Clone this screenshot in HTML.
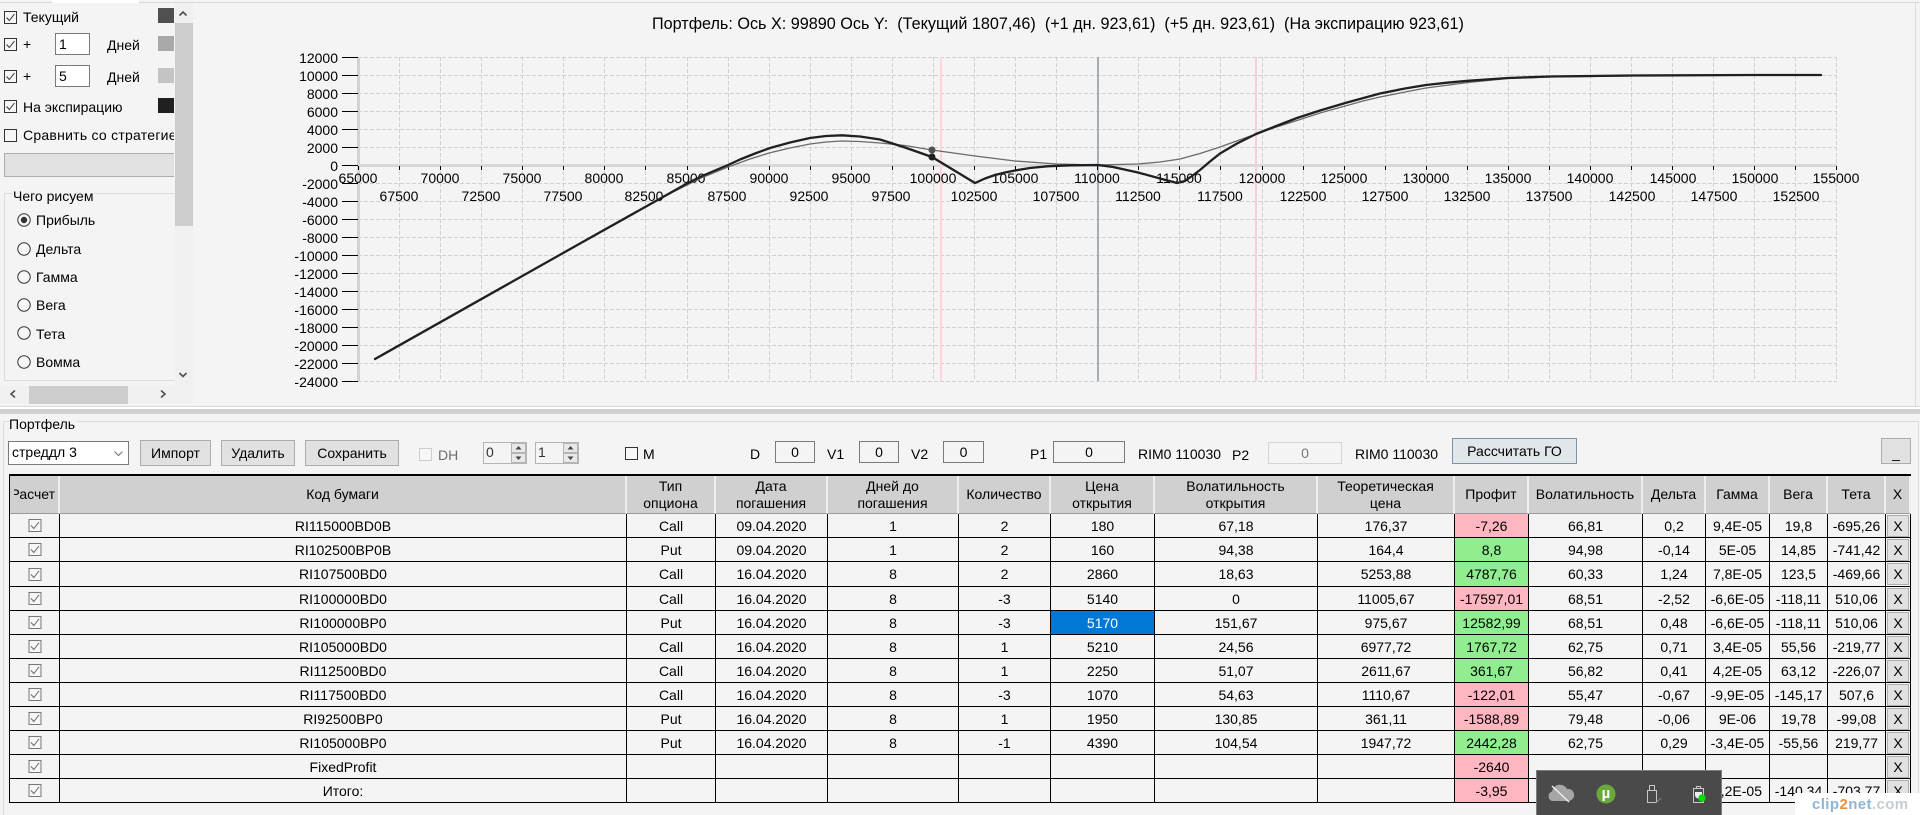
<!DOCTYPE html>
<html lang="ru"><head><meta charset="utf-8"><title>Портфель</title>
<style>
html,body{margin:0;padding:0;width:1920px;height:815px;overflow:hidden;background:#f4f4f4}
body{position:relative;font:14px/16px "Liberation Sans",Arial,sans-serif;color:#000}
.a{position:absolute;white-space:nowrap;box-sizing:border-box}
.box{border:1px solid #7a7a7a;text-align:center;background:#f4f4f4}
.btn{background:#e1e1e1;border:1px solid #adadad;text-align:center}
.sw{width:16px;height:15px;left:158px}
.cb{width:13px;height:13px;left:4px}
svg{display:block}
table{position:absolute;left:9px;top:474px;width:1902px;table-layout:fixed;border-collapse:separate;border-spacing:0;border-left:1px solid #000;border-top:2px solid #000;background:#f4f4f4}
td,th{box-sizing:border-box;padding:0;text-align:center;white-space:nowrap;overflow:hidden;font-weight:normal;border-right:1px solid #000;border-bottom:1px solid #000;height:24px;line-height:16px}
th{height:38px;background:#d0d0d0;border-right:2px solid #eee;border-bottom:1px solid #9a9a9a;line-height:17px}
tr.t td{height:25px}
.p{background:#ffb6c1}.g{background:#90ee90}
.s{background:#0078d7;color:#fff}
.x{display:block;box-sizing:border-box;width:22px;height:22px;margin-left:1px;line-height:20px;background:#e1e1e1;border:1px solid #adadad}
.tc{margin:0 auto;display:block;transform:translateX(.5px)}
</style></head><body>
<svg width="0" height="0" style="position:absolute"><defs>
<symbol id="c" viewBox="0 0 13 13"><rect x=".5" y=".5" width="12" height="12" fill="#f6f6f6" stroke="#333"/><path d="M2.5 6.5l2.8 3 5.2-6.5" fill="none" stroke="#333" stroke-width="1"/></symbol>
<symbol id="e" viewBox="0 0 13 13"><rect x=".5" y=".5" width="12" height="12" fill="#f6f6f6" stroke="#333"/></symbol>
<symbol id="d" viewBox="0 0 13 13"><rect x=".5" y=".5" width="12" height="12" fill="#f6f6f6" stroke="#777"/><path d="M2.5 6.5l2.8 3 5.2-6.5" fill="none" stroke="#666" stroke-width="1"/></symbol>
<symbol id="r" viewBox="0 0 14 14"><circle cx="7" cy="7" r="6.2" fill="#f6f6f6" stroke="#333"/></symbol>
</defs></svg>

<!-- top strip -->
<div class="a" style="left:0;top:2px;width:1920px;height:1px;background:#d8d8d8"></div>
<div class="a" style="left:52px;top:0;width:87px;height:3px;background:#fff"></div>

<!-- left panel -->
<svg class="a cb" style="top:11px"><use href="#c"/></svg><div class="a" style="left:23px;top:9px">Текущий</div>
<svg class="a cb" style="top:38px"><use href="#c"/></svg><div class="a" style="left:23px;top:36px">+</div>
<svg class="a cb" style="top:70px"><use href="#c"/></svg><div class="a" style="left:23px;top:68px">+</div>
<div class="a box" style="left:55px;top:33px;width:35px;height:22px;text-align:left;padding:2px 0 0 3px;background:#fff">1</div>
<div class="a box" style="left:55px;top:65px;width:35px;height:22px;text-align:left;padding:2px 0 0 3px;background:#fff">5</div>
<div class="a" style="left:107px;top:37px">Дней</div>
<div class="a" style="left:107px;top:69px">Дней</div>
<div class="a sw" style="top:8px;background:#505050"></div>
<div class="a sw" style="top:36px;background:#a9a9a9"></div>
<div class="a sw" style="top:68px;background:#c4c4c4"></div>
<div class="a sw" style="top:98px;background:#202020"></div>
<svg class="a cb" style="top:100px"><use href="#c"/></svg><div class="a" style="left:23px;top:99px">На экспирацию</div>
<svg class="a cb" style="top:129px"><use href="#e"/></svg><div class="a" style="left:23px;top:127px;width:151px;overflow:hidden;letter-spacing:.25px">Сравнить со стратегией</div>
<div class="a" style="left:4px;top:153px;width:170px;height:24px;background:#e1e1e1;border:1px solid #adadad;border-right:0"></div>
<div class="a" style="left:4px;top:193px;width:170px;height:188px;border:1px solid #dcdcdc;border-right:0"></div>
<div class="a" style="left:12px;top:188px;background:#f4f4f4;padding:0 1px">Чего рисуем</div>
<svg class="a" style="left:17px;top:213px" width="14" height="14"><use href="#r"/><circle cx="7" cy="7" r="3.2" fill="#333"/></svg><div class="a" style="left:36px;top:212px">Прибыль</div>
<svg class="a" style="left:17px;top:242px" width="14" height="14"><use href="#r"/></svg><div class="a" style="left:36px;top:241px">Дельта</div>
<svg class="a" style="left:17px;top:270px" width="14" height="14"><use href="#r"/></svg><div class="a" style="left:36px;top:269px">Гамма</div>
<svg class="a" style="left:17px;top:298px" width="14" height="14"><use href="#r"/></svg><div class="a" style="left:36px;top:297px">Вега</div>
<svg class="a" style="left:17px;top:326px" width="14" height="14"><use href="#r"/></svg><div class="a" style="left:36px;top:326px">Тета</div>
<svg class="a" style="left:17px;top:355px" width="14" height="14"><use href="#r"/></svg><div class="a" style="left:36px;top:354px">Вомма</div>

<!-- scrollbars -->
<div class="a" style="left:175px;top:3px;width:18px;height:401px;background:#f0f0f0"></div>
<div class="a" style="left:175px;top:23px;width:18px;height:203px;background:#cdcdcd"></div>
<div class="a" style="left:0;top:386px;width:175px;height:18px;background:#f0f0f0"></div>
<div class="a" style="left:29px;top:386px;width:99px;height:18px;background:#cdcdcd"></div>
<svg class="a" style="left:0;top:0" width="193" height="404" fill="none" stroke="#505050" stroke-width="1.6"><path d="M179.5 15.5l3.5-3.5 3.5 3.5M179.5 373l3.5 3.5 3.5-3.5M15 390.5l-4 3.500 4 3.500M161 390.5l4 3.500-4 3.500"/></svg>

<!-- chart -->
<div class="a" style="left:652px;top:16px;white-space:pre;font-size:16.2px">Портфель: Ось X: 99890 Ось Y:  (Текущий 1807,46)  (+1 дн. 923,61)  (+5 дн. 923,61)  (На экспирацию 923,61)</div>
<svg class="a" style="left:0;top:0" width="1920" height="405" font-family="Liberation Sans,Arial,sans-serif" font-size="14" fill="#000">
<path d="M358 57.500H1837M358 75.500H1837M358 93.500H1837M358 111.500H1837M358 129.500H1837M358 147.500H1837M358 183.500H1837M358 201.500H1837M358 219.500H1837M358 237.500H1837M358 255.500H1837M358 273.500H1837M358 291.500H1837M358 309.500H1837M358 327.500H1837M358 345.500H1837M358 363.500H1837M358 381.500H1837" stroke="#d0d0d0" stroke-dasharray="4 2" fill="none"/>
<path d="M399.500 57V381M440.500 57V381M481.500 57V381M522.500 57V381M563.500 57V381M604.500 57V381M645.500 57V381M687.500 57V381M728.500 57V381M769.500 57V381M810.500 57V381M851.500 57V381M892.500 57V381M933.500 57V381M974.500 57V381M1015.500 57V381M1056.500 57V381M1097.500 57V381M1138.500 57V381M1179.500 57V381M1220.500 57V381M1262.500 57V381M1303.500 57V381M1344.500 57V381M1385.500 57V381M1426.500 57V381M1467.500 57V381M1508.500 57V381M1549.500 57V381M1590.500 57V381M1631.500 57V381M1672.500 57V381M1713.500 57V381M1754.500 57V381M1795.500 57V381M1836.500 57V381" stroke="#d0d0d0" stroke-dasharray="4 2" fill="none"/>
<rect x="357" y="57" width="3" height="324" fill="#d2d2d2"/>
<rect x="358" y="164" width="1479" height="3" fill="#d8d8d8"/>
<rect x="940" y="57" width="2" height="324" fill="#ffd4da"/>
<rect x="1255" y="57" width="2" height="324" fill="#f2d0d6"/>
<rect x="1097" y="57" width="2" height="324" fill="#a4adba"/>
<path d="M342 57.500H358M342 75.500H358M342 93.500H358M342 111.500H358M342 129.500H358M342 147.500H358M342 165.500H358M342 183.500H358M342 201.500H358M342 219.500H358M342 237.500H358M342 255.500H358M342 273.500H358M342 291.500H358M342 309.500H358M342 327.500H358M342 345.500H358M342 363.500H358M342 381.500H358" stroke="#000" fill="none"/>
<path d="M358.500 166V170M399.500 166V170M440.500 166V170M481.500 166V170M522.500 166V170M563.500 166V170M604.500 166V170M645.500 166V170M687.500 166V170M728.500 166V170M769.500 166V170M810.500 166V170M851.500 166V170M892.500 166V170M933.500 166V170M974.500 166V170M1015.500 166V170M1056.500 166V170M1097.500 166V170M1138.500 166V170M1179.500 166V170M1220.500 166V170M1262.500 166V170M1303.500 166V170M1344.500 166V170M1385.500 166V170M1426.500 166V170M1467.500 166V170M1508.500 166V170M1549.500 166V170M1590.500 166V170M1631.500 166V170M1672.500 166V170M1713.500 166V170M1754.500 166V170M1795.500 166V170M1836.500 166V170" stroke="#000" fill="none"/>
<g text-anchor="end">
<text x="338" y="63">12000</text><text x="338" y="81">10000</text><text x="338" y="99">8000</text><text x="338" y="117">6000</text><text x="338" y="135">4000</text><text x="338" y="153">2000</text><text x="338" y="171">0</text><text x="338" y="189">-2000</text><text x="338" y="207">-4000</text><text x="338" y="225">-6000</text><text x="338" y="243">-8000</text><text x="338" y="261">-10000</text><text x="338" y="279">-12000</text><text x="338" y="297">-14000</text><text x="338" y="315">-16000</text><text x="338" y="333">-18000</text><text x="338" y="351">-20000</text><text x="338" y="369">-22000</text><text x="338" y="387">-24000</text>
</g>
<g text-anchor="middle">
<text x="358" y="183">65000</text><text x="440" y="183">70000</text><text x="522" y="183">75000</text><text x="604" y="183">80000</text><text x="686" y="183">85000</text><text x="769" y="183">90000</text><text x="851" y="183">95000</text><text x="933" y="183">100000</text><text x="1015" y="183">105000</text><text x="1097" y="183">110000</text><text x="1179" y="183">115000</text><text x="1262" y="183">120000</text><text x="1344" y="183">125000</text><text x="1426" y="183">130000</text><text x="1508" y="183">135000</text><text x="1590" y="183">140000</text><text x="1673" y="183">145000</text><text x="1755" y="183">150000</text><text x="1836" y="183">155000</text>
<text x="399" y="201">67500</text><text x="481" y="201">72500</text><text x="563" y="201">77500</text><text x="644" y="201">82500</text><text x="727" y="201">87500</text><text x="809" y="201">92500</text><text x="891" y="201">97500</text><text x="974" y="201">102500</text><text x="1056" y="201">107500</text><text x="1138" y="201">112500</text><text x="1220" y="201">117500</text><text x="1303" y="201">122500</text><text x="1385" y="201">127500</text><text x="1467" y="201">132500</text><text x="1549" y="201">137500</text><text x="1632" y="201">142500</text><text x="1714" y="201">147500</text><text x="1796" y="201">152500</text>
</g>
<polyline fill="none" stroke="#6a6a6a" stroke-width="1.300" stroke-linejoin="round" points="375,359 588,239 663,197 701,178 728,167 750,159 770,152.700 790,148 810,144 826,142 842,141 860,141.500 880,143 905,145.500 932,150 975,156 1015,161 1057,164 1097,165 1138,164 1160,162 1180,159 1200,153.500 1220,147 1238,140.500 1256,134 1275,127.500 1297,120.500 1320,113 1347,105.500 1363,101 1380,97 1405,92 1426,88 1468,82.500 1508,78.500 1549,77 1631,76"/>
<polyline fill="none" stroke="#202020" stroke-width="2.300" stroke-linejoin="round" stroke-linecap="round" points="375,359 588,239 663,197 686,184 701,176.500 715,170.500 728,165 740,159.500 755,153.500 770,148 790,142.500 810,138 826,136 842,135.300 860,136.500 880,139.500 905,147.500 932,157 975,183 985,178.500 995,175 1005,172.500 1015,170.500 1030,168 1047,166.300 1070,165.300 1098,165 1113,167 1138,172.500 1160,178.500 1177,183 1185,181 1192,176 1200,170 1210,161.500 1220,153.500 1237,143.500 1256,134 1275,126.500 1297,118 1320,110.500 1347,102.500 1380,93.500 1405,88.500 1426,85 1447,82.700 1468,80.800 1508,78 1549,76.500 1590,76 1631,75.500 1755,75 1821,75"/>
<circle cx="932" cy="150" r="3.500" fill="#505050"/><circle cx="932" cy="157" r="3.500" fill="#202020"/>
</svg>

<!-- panel dividers -->
<div class="a" style="left:0;top:406px;width:1920px;height:1px;background:#d8d8d8"></div>
<div class="a" style="left:0;top:407px;width:1920px;height:2px;background:#fff"></div>
<div class="a" style="left:1915px;top:3px;width:1px;height:403px;background:#dcdcdc"></div>
<div class="a" style="left:0;top:409px;width:1920px;height:5px;background:#d0d0d0"></div>

<!-- portfolio group -->
<div class="a" style="left:3px;top:421px;width:1916px;height:400px;border:1px solid #dcdcdc"></div>
<div class="a" style="left:9px;top:416px;background:#f4f4f4;padding-right:2px">Портфель</div>
<div class="a" style="left:8px;top:441px;width:121px;height:24px;background:#fff;border:1px solid #7a7a7a;padding:2px 0 0 3px">стреддл 3</div>
<svg class="a" style="left:114px;top:451px" width="9" height="6" fill="none" stroke="#707070"><path d="M.5 .5l4 4 4-4"/></svg>
<div class="a btn" style="left:140px;top:440px;width:71px;height:26px;line-height:24px">Импорт</div>
<div class="a btn" style="left:221px;top:440px;width:74px;height:26px;line-height:24px">Удалить</div>
<div class="a btn" style="left:305px;top:440px;width:94px;height:26px;line-height:24px">Сохранить</div>
<div class="a" style="left:419px;top:448px;width:13px;height:13px;border:1px solid #ccc;background:#f6f6f6"></div>
<div class="a" style="left:438px;top:447px;color:#6d6d6d">DH</div>
<div class="a" style="left:483px;top:442px;width:44px;height:22px;border:1px solid #b4b4b4;padding:1px 0 0 2px;background:#f4f4f4;color:#333">0</div>
<div class="a" style="left:535px;top:442px;width:44px;height:22px;border:1px solid #b4b4b4;padding:1px 0 0 2px;background:#f4f4f4;color:#333">1</div>
<svg class="a" style="left:511px;top:443px" width="15" height="20"><rect x=".5" y=".5" width="14" height="9" fill="#e8e8e8" stroke="#b4b4b4"/><rect x=".5" y="10.500" width="14" height="9" fill="#e8e8e8" stroke="#b4b4b4"/><path d="M7.500 3l3 3.500h-6zM7.500 17l3-3.500h-6z" fill="#444"/></svg>
<svg class="a" style="left:563px;top:443px" width="15" height="20"><rect x=".5" y=".5" width="14" height="9" fill="#e8e8e8" stroke="#b4b4b4"/><rect x=".5" y="10.500" width="14" height="9" fill="#e8e8e8" stroke="#b4b4b4"/><path d="M7.500 3l3 3.500h-6zM7.500 17l3-3.500h-6z" fill="#444"/></svg>
<div class="a" style="left:625px;top:447px;width:13px;height:13px;border:1px solid #333;background:#f6f6f6"></div>
<div class="a" style="left:643px;top:446px">M</div>
<div class="a" style="left:750px;top:446px">D</div>
<div class="a box" style="left:775px;top:441px;width:40px;height:22px;line-height:20px">0</div>
<div class="a" style="left:827px;top:446px">V1</div>
<div class="a box" style="left:859px;top:441px;width:40px;height:22px;line-height:20px">0</div>
<div class="a" style="left:911px;top:446px">V2</div>
<div class="a box" style="left:943px;top:441px;width:41px;height:22px;line-height:20px">0</div>
<div class="a" style="left:1030px;top:446px">P1</div>
<div class="a box" style="left:1053px;top:441px;width:72px;height:22px;line-height:20px">0</div>
<div class="a" style="left:1138px;top:446px">RIM0 110030</div>
<div class="a" style="left:1232px;top:447px">P2</div>
<div class="a" style="left:1268px;top:442px;width:74px;height:22px;border:1px solid #d4d4d4;text-align:center;line-height:20px;color:#777">0</div>
<div class="a" style="left:1355px;top:446px">RIM0 110030</div>
<div class="a" style="left:1452px;top:438px;width:125px;height:26px;background:#e1e6ea;border:1px solid #7a93ab;text-align:center;line-height:24px">Рассчитать ГО</div>
<div class="a btn" style="left:1881px;top:438px;width:30px;height:26px;line-height:28px">_</div>

<table>
<colgroup><col style="width:50px"><col style="width:567px"><col style="width:89px"><col style="width:112px"><col style="width:131px"><col style="width:92px"><col style="width:104px"><col style="width:163px"><col style="width:137px"><col style="width:74px"><col style="width:114px"><col style="width:63px"><col style="width:64px"><col style="width:58px"><col style="width:58px"><col style="width:25px"></colgroup>
<tr><th><div style="margin-left:4px;width:41px;overflow:hidden;direction:rtl;white-space:nowrap">Расчет</div></th><th>Код бумаги</th><th>Тип<br>опциона</th><th>Дата<br>погашения</th><th>Дней до<br>погашения</th><th>Количество</th><th>Цена<br>открытия</th><th>Волатильность<br>открытия</th><th>Теоретическая<br>цена</th><th>Профит</th><th>Волатильность</th><th>Дельта</th><th>Гамма</th><th>Вега</th><th>Тета</th><th>X</th></tr>
<tr><td><svg class="tc" width="13" height="13"><use href="#d"/></svg></td><td>RI115000BD0B</td><td>Call</td><td>09.04.2020</td><td>1</td><td>2</td><td>180</td><td>67,18</td><td>176,37</td><td class="p">-7,26</td><td>66,81</td><td>0,2</td><td>9,4E-05</td><td>19,8</td><td>-695,26</td><td><span class="x">X</span></td></tr>
<tr><td><svg class="tc" width="13" height="13"><use href="#d"/></svg></td><td>RI102500BP0B</td><td>Put</td><td>09.04.2020</td><td>1</td><td>2</td><td>160</td><td>94,38</td><td>164,4</td><td class="g">8,8</td><td>94,98</td><td>-0,14</td><td>5E-05</td><td>14,85</td><td>-741,42</td><td><span class="x">X</span></td></tr>
<tr class="t"><td><svg class="tc" width="13" height="13"><use href="#d"/></svg></td><td>RI107500BD0</td><td>Call</td><td>16.04.2020</td><td>8</td><td>2</td><td>2860</td><td>18,63</td><td>5253,88</td><td class="g">4787,76</td><td>60,33</td><td>1,24</td><td>7,8E-05</td><td>123,5</td><td>-469,66</td><td><span class="x">X</span></td></tr>
<tr><td><svg class="tc" width="13" height="13"><use href="#d"/></svg></td><td>RI100000BD0</td><td>Call</td><td>16.04.2020</td><td>8</td><td>-3</td><td>5140</td><td>0</td><td>11005,67</td><td class="p">-17597,01</td><td>68,51</td><td>-2,52</td><td>-6,6E-05</td><td>-118,11</td><td>510,06</td><td><span class="x">X</span></td></tr>
<tr><td><svg class="tc" width="13" height="13"><use href="#d"/></svg></td><td>RI100000BP0</td><td>Put</td><td>16.04.2020</td><td>8</td><td>-3</td><td class="s">5170</td><td>151,67</td><td>975,67</td><td class="g">12582,99</td><td>68,51</td><td>0,48</td><td>-6,6E-05</td><td>-118,11</td><td>510,06</td><td><span class="x">X</span></td></tr>
<tr><td><svg class="tc" width="13" height="13"><use href="#d"/></svg></td><td>RI105000BD0</td><td>Call</td><td>16.04.2020</td><td>8</td><td>1</td><td>5210</td><td>24,56</td><td>6977,72</td><td class="g">1767,72</td><td>62,75</td><td>0,71</td><td>3,4E-05</td><td>55,56</td><td>-219,77</td><td><span class="x">X</span></td></tr>
<tr><td><svg class="tc" width="13" height="13"><use href="#d"/></svg></td><td>RI112500BD0</td><td>Call</td><td>16.04.2020</td><td>8</td><td>1</td><td>2250</td><td>51,07</td><td>2611,67</td><td class="g">361,67</td><td>56,82</td><td>0,41</td><td>4,2E-05</td><td>63,12</td><td>-226,07</td><td><span class="x">X</span></td></tr>
<tr><td><svg class="tc" width="13" height="13"><use href="#d"/></svg></td><td>RI117500BD0</td><td>Call</td><td>16.04.2020</td><td>8</td><td>-3</td><td>1070</td><td>54,63</td><td>1110,67</td><td class="p">-122,01</td><td>55,47</td><td>-0,67</td><td>-9,9E-05</td><td>-145,17</td><td>507,6</td><td><span class="x">X</span></td></tr>
<tr><td><svg class="tc" width="13" height="13"><use href="#d"/></svg></td><td>RI92500BP0</td><td>Put</td><td>16.04.2020</td><td>8</td><td>1</td><td>1950</td><td>130,85</td><td>361,11</td><td class="p">-1588,89</td><td>79,48</td><td>-0,06</td><td>9E-06</td><td>19,78</td><td>-99,08</td><td><span class="x">X</span></td></tr>
<tr><td><svg class="tc" width="13" height="13"><use href="#d"/></svg></td><td>RI105000BP0</td><td>Put</td><td>16.04.2020</td><td>8</td><td>-1</td><td>4390</td><td>104,54</td><td>1947,72</td><td class="g">2442,28</td><td>62,75</td><td>0,29</td><td>-3,4E-05</td><td>-55,56</td><td>219,77</td><td><span class="x">X</span></td></tr>
<tr><td><svg class="tc" width="13" height="13"><use href="#d"/></svg></td><td>FixedProfit</td><td></td><td></td><td></td><td></td><td></td><td></td><td></td><td class="p">-2640</td><td></td><td></td><td></td><td></td><td></td><td><span class="x">X</span></td></tr>
<tr><td><svg class="tc" width="13" height="13"><use href="#d"/></svg></td><td>Итого:</td><td></td><td></td><td></td><td></td><td></td><td></td><td></td><td class="p">-3,95</td><td></td><td></td><td>1,2E-05</td><td>-140,34</td><td>-703,77</td><td><span class="x">X</span></td></tr>
</table>

<!-- tray popup -->
<div class="a" style="left:1536px;top:770px;width:186px;height:45px;background:#4a4a4a;border:1px solid #7c7c7c;border-bottom:0"></div>
<svg class="a" style="left:1536px;top:770px" width="186" height="45">
<path d="M16 31a5 5 0 0 1 0-9.500a8 8 0 0 1 15-2.500a6 6 0 0 1 2 12z" fill="#a6a6a6"/>
<path d="M16 16L33 32" stroke="#eee" stroke-width="1.500"/>
<circle cx="70" cy="24" r="9.500" fill="#6aa83c"/>
<text x="70" y="28" text-anchor="middle" font-family="Liberation Sans,Arial,sans-serif" font-size="15" font-weight="bold" fill="#fff">µ</text>
<path d="M111.500 20.500h9v12h-9zM113.500 20.500v-5h5v5" fill="none" stroke="#c8c8c8"/>
<path d="M120 33l5-5" stroke="#888" fill="none"/>
<path d="M157.500 18.500h10v14h-10zM160.500 18.500v-2h4v2" fill="none" stroke="#c8c8c8"/>
<path d="M159 22h7v3a3.500 3.500 0 0 1-7 0z" fill="#eee"/>
<circle cx="166" cy="28" r="3.700" fill="#00e000"/>
</svg>

<!-- watermark -->
<div class="a" style="left:1795px;top:793px;width:125px;height:22px;background:#fff"></div>
<div class="a" style="left:1812px;top:796px;font-size:15px;font-weight:bold;line-height:17px;letter-spacing:.4px;color:#8fb5d5">clip<span style="color:#e8913a">2</span>net<span style="color:#c2ccd3">.com</span></div>
</body></html>
